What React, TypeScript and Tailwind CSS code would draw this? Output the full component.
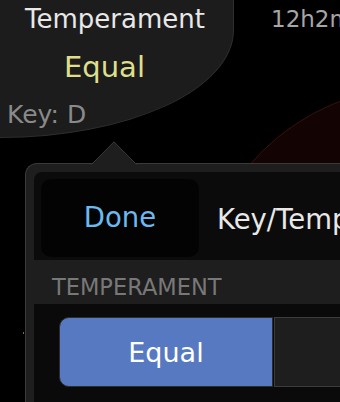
export default function App() {
  return (
    <div className="relative h-[402px] w-[340px] overflow-hidden bg-black font-['DejaVu_Sans',sans-serif]">
      {/* dark red dial behind the popover */}
      <div className="absolute left-[195px] top-[86px] h-[450px] w-[450px] rounded-full border border-[#341212] bg-[#130303]" />
      <div className="absolute left-[23px] top-[332px] h-[2px] w-px bg-[#8c6a2a]" />

      <div className="relative flex h-[138px]">
        <div className="flex h-[138px] w-[234px] shrink-0 flex-col items-start rounded-br-[234px_108px] border-b border-r border-[#2e2e2e] bg-[#1c1c1c]">
          <span className="ml-[25px] mt-[6px] whitespace-nowrap text-[26px] leading-none text-[#e8e8e8]">
            Temperament
          </span>
          <span className="ml-[64px] mt-[21px] text-[29px] leading-none text-[#dfdf8b]">
            Equal
          </span>
          <span className="ml-[7px] mt-[20px] whitespace-nowrap text-[25px] leading-none text-[#8a8a8a]">
            Key: D
          </span>
        </div>
        <span className="ml-[37px] mt-[8px] whitespace-nowrap text-[23px] leading-none text-[#a6a6a6]">
          12h2m
        </span>
      </div>

      <div className="relative ml-[25px] mt-[25px] rounded-tl-[12px] border-l border-t border-[#3a3a3a] bg-[#1e1e1e] pl-[8px] pt-[8px]">
        <svg
          className="absolute left-[65px] top-[-23px]"
          width="46"
          height="24"
          viewBox="0 0 46 24"
        >
          <path d="M0.5 24 L23 0.8 L45.5 24 Z" fill="#1e1e1e" />
          <path d="M0.5 23.5 L23 0.8 L45.5 23.5" fill="none" stroke="#3a3a3a" strokeWidth="1" />
        </svg>

        <div className="flex h-[88px] items-start gap-[18px] rounded-tl-[8px] bg-[#0b0b0b] pl-[7px] pt-[7px]">
          <div className="flex h-[78px] w-[158px] shrink-0 items-center justify-center rounded-[10px] bg-[#030303] text-[27.5px] leading-none text-[#6cb9ef]">
            Done
          </div>
          <span className="self-center whitespace-nowrap text-[27.5px] leading-none text-[#e8e8e8]">
            Key/Temperament
          </span>
        </div>

        <div className="h-[44px] pl-[18px] pt-[16px] text-[22.5px] leading-none text-[#787878]">
          TEMPERAMENT
        </div>

        <div className="flex bg-[#0a0a0a] pb-[16px] pl-[25px] pt-[13px]">
          <div className="flex h-[70px] w-[214px] shrink-0 items-center justify-center rounded-l-[10px] border border-[#2c2c2c] bg-[#5779c2] text-[27px] leading-none text-white">
            Equal
          </div>
          <div className="ml-px h-[70px] w-[120px] shrink-0 border border-[#3c3c3c] bg-[#1e1e1e]" />
        </div>
      </div>
    </div>
  );
}
